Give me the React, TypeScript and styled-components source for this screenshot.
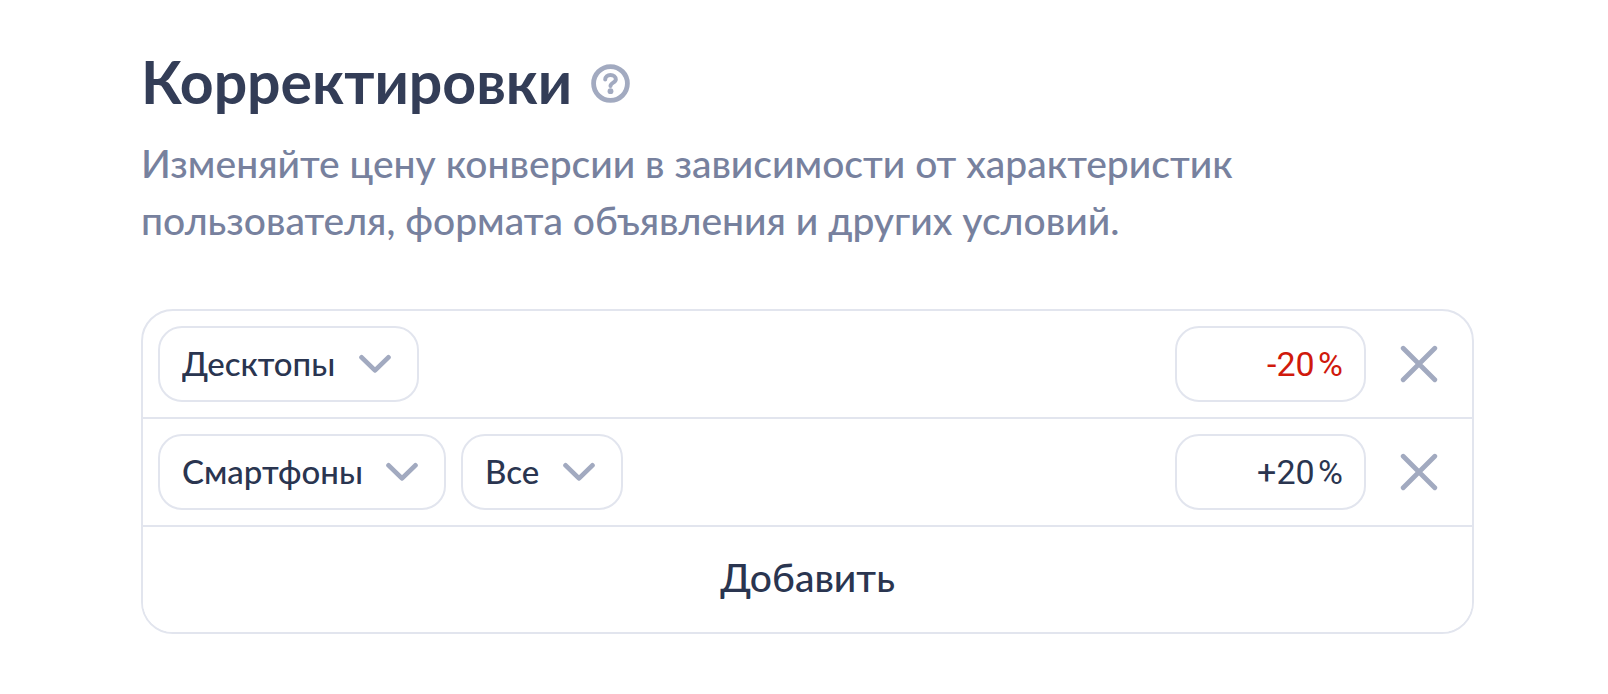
import React, { useState } from 'react';
import styled, { createGlobalStyle } from 'styled-components';

const color = {
  heading: '#333d57',
  text: '#2a3550',
  muted: '#77819e',
  icon: '#a2aac0',
  line: '#e2e5ee',
  negative: '#d0190c',
};

const GlobalStyle = createGlobalStyle`
  *, *::before, *::after { box-sizing: border-box; }
  body {
    margin: 0;
    background: #fff;
    color: ${color.text};
    font-family: Lato, 'Noto Sans', sans-serif;
  }
  button, input, select { font: inherit; color: inherit; }
`;

const Page = styled.main`
  padding: 47px 134px 60px 141px;
`;

const Header = styled.header`
  display: flex;
  align-items: center;
  gap: 19px;
`;

const Title = styled.h1`
  margin: 0;
  padding-bottom: 3px;
  color: ${color.heading};
  font-size: 59px;
  font-weight: 700;
  line-height: 70px;
`;

const IconButton = styled.button`
  display: flex;
  align-items: center;
  justify-content: center;
  padding: 0;
  border: 0;
  background: none;
  color: ${color.icon};
  cursor: pointer;
`;

const Description = styled.p`
  max-width: 1140px;
  margin: 15px 0 0;
  color: ${color.muted};
  font-size: 39px;
  font-weight: 500;
  line-height: 57px;
`;

const Card = styled.section`
  margin-top: 60px;
  border: 2px solid ${color.line};
  border-radius: 32px;
  overflow: hidden;
`;

const Row = styled.div`
  display: flex;
  align-items: center;
  padding: 15px 0 15px 15px;
  border-bottom: 2px solid ${color.line};
`;

const Filters = styled.div`
  display: flex;
  flex: 1;
  gap: 15px;
`;

const SelectBox = styled.label`
  display: grid;
  grid-template-areas: 'field';
  align-items: center;

  svg {
    grid-area: field;
    justify-self: end;
    margin-right: 28px;
    color: ${color.icon};
    pointer-events: none;
  }
`;

const Select = styled.select`
  grid-area: field;
  height: 76px;
  padding: 0 81px 2px 22px;
  border: 2px solid ${color.line};
  border-radius: 24px;
  appearance: none;
  background: #fff;
  font-size: 33px;
  font-weight: 500;
`;

const PercentInput = styled.input<{ $negative: boolean }>`
  width: 191px;
  height: 76px;
  padding: 0 21px;
  border: 2px solid ${color.line};
  border-radius: 24px;
  background: #fff;
  font-family: Roboto, 'Noto Sans', sans-serif;
  font-size: 34px;
  text-align: right;

  && { color: ${({ $negative }) => ($negative ? color.negative : color.text)}; }
`;

const RemoveButton = styled(IconButton)`
  width: 106px;
  height: 76px;
`;

const AddButton = styled.button`
  display: block;
  width: 100%;
  height: 105px;
  padding: 0 0 6px;
  border: 0;
  background: #fff;
  font-size: 39px;
  font-weight: 500;
  cursor: pointer;
`;

const HelpIcon = () => (
  <svg width="39" height="39" viewBox="0 0 39 39" fill="none" stroke="currentColor" aria-hidden="true">
    <circle cx="19.5" cy="19.5" r="16.9" strokeWidth="4.8" />
    <path
      d="M14.2 15.6C14.2 12.6 16.5 11 19.4 11C22.6 11 24.8 12.8 24.8 15.4C24.8 18.6 19.5 18.6 19.5 22"
      strokeWidth="4"
      strokeLinecap="round"
    />
    <circle cx="19.5" cy="27.2" r="2.9" fill="currentColor" stroke="none" />
  </svg>
);

const ChevronIcon = () => (
  <svg width="32" height="20" viewBox="0 0 32 20" fill="none" stroke="currentColor" strokeWidth="4.8" aria-hidden="true">
    <path d="M2.6 3.4L16 16.4L29.4 3.4" strokeLinecap="round" strokeLinejoin="round" />
  </svg>
);

const CrossIcon = () => (
  <svg width="38" height="38" viewBox="0 0 38 38" fill="none" stroke="currentColor" strokeWidth="4.8" aria-hidden="true">
    <path d="M3.2 3.2L34.8 34.8M34.8 3.2L3.2 34.8" strokeLinecap="round" />
  </svg>
);

type Adjustment = { id: number; filters: string[]; percent: string };

const initial: Adjustment[] = [
  { id: 1, filters: ['Десктопы'], percent: '-20\u200A%' },
  { id: 2, filters: ['Смартфоны', 'Все'], percent: '+20\u200A%' },
];

export default function App() {
  const [rows, setRows] = useState(initial);

  const setPercent = (id: number, percent: string) =>
    setRows(rows.map((row) => (row.id === id ? { ...row, percent } : row)));

  const add = () =>
    setRows([...rows, { id: Date.now(), filters: ['Десктопы'], percent: '+0\u200A%' }]);

  return (
    <>
      <GlobalStyle />
      <Page>
        <Header>
          <Title>Корректировки</Title>
          <IconButton type="button" aria-label="Справка">
            <HelpIcon />
          </IconButton>
        </Header>
        <Description>
          Изменяйте цену конверсии в зависимости от характеристик пользователя, формата объявления и
          других условий.
        </Description>
        <Card>
          {rows.map((row) => (
            <Row key={row.id}>
              <Filters>
                {row.filters.map((filter) => (
                  <SelectBox key={filter}>
                    <Select aria-label="Условие" defaultValue={filter}>
                      <option>{filter}</option>
                    </Select>
                    <ChevronIcon />
                  </SelectBox>
                ))}
              </Filters>
              <PercentInput
                aria-label="Корректировка"
                value={row.percent}
                $negative={row.percent.startsWith('-')}
                onChange={(event) => setPercent(row.id, event.target.value)}
              />
              <RemoveButton
                type="button"
                aria-label="Удалить"
                onClick={() => setRows(rows.filter(({ id }) => id !== row.id))}
              >
                <CrossIcon />
              </RemoveButton>
            </Row>
          ))}
          <AddButton type="button" onClick={add}>
            Добавить
          </AddButton>
        </Card>
      </Page>
    </>
  );
}
